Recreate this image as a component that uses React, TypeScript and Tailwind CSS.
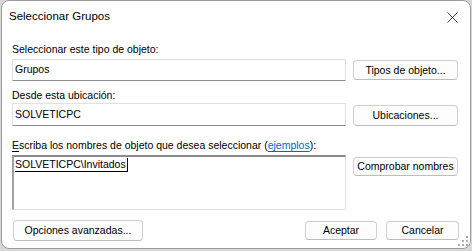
import React from 'react';

function Btn({ label, className }: { label: React.ReactNode; className: string }) {
  return (
    <div
      className={`flex shrink-0 items-center justify-center rounded-[4px] border border-[#d0d0d0] border-b-[#bdbdbd] bg-[#fdfdfd] text-[10.5px] leading-none text-black ${className}`}
    >
      {label}
    </div>
  );
}

export default function App() {
  return (
    <div className="h-[251px] w-[472px] overflow-hidden bg-[#d8d8d8] font-['Liberation_Sans',Arial,sans-serif] text-black">
      <div className="relative ml-px flex h-[249px] w-[470px] flex-col rounded-lg border border-[#9c9c9c] bg-white">
        {/* Title bar */}
        <div className="flex h-[31px] shrink-0 items-center justify-between pl-[7px] pr-[12px]">
          <span className="text-[11.5px] leading-none">Seleccionar Grupos</span>
          <svg width="11" height="11" viewBox="0 0 11 11" className="mt-px">
            <path d="M0.5 0.5 L10.5 10.5 M10.5 0.5 L0.5 10.5" stroke="#2a2a2a" strokeWidth="0.9" fill="none" />
          </svg>
        </div>

        <div className="flex flex-col pl-[10px] text-[10.5px]">
          <div className="mt-[10px] h-[14px] leading-[14px]">Seleccionar este tipo de objeto:</div>
          <div className="mt-[3px] flex gap-[7px]">
            <div className="flex h-[22px] w-[334px] items-center border border-[#e2e2e2] border-b-[#8d8d8d] bg-white pl-[2px]">
              Grupos
            </div>
            <Btn label="Tipos de objeto..." className="mt-px h-[20px] w-[105px]" />
          </div>

          <div className="mt-[7px] h-[14px] leading-[14px]">Desde esta ubicación:</div>
          <div className="mt-px flex gap-[7px]">
            <div className="flex h-[23px] w-[334px] items-center border border-[#e2e2e2] border-b-[#8d8d8d] bg-white pl-[2px]">
              SOLVETICPC
            </div>
            <Btn label="Ubicaciones..." className="mt-[2px] h-[21px] w-[105px]" />
          </div>

          <div className="mt-[12px] h-[14px] leading-[14px]">
            <span className="underline underline-offset-2">E</span>scriba los nombres de objeto que desea seleccionar (
            <span className="text-[#0066cc] underline underline-offset-2">ejemplos</span>):
          </div>
          <div className="mt-[3px] flex gap-[7px]">
            <div className="h-[55px] w-[334px] border-l-2 border-t-2 border-b border-r border-l-[#a0a0a0] border-t-[#8a8a8a] border-b-[#e3e3e3] border-r-[#e3e3e3] bg-white pl-px">
              <span className="inline-block border-b border-r border-black pr-px leading-[13px]">SOLVETICPC\Invitados</span>
            </div>
            <Btn label="Comprobar nombres" className="mt-[2px] h-[19px] w-[105px]" />
          </div>

          <div className="mt-[10px] flex">
            <Btn label="Opciones avanzadas..." className="ml-px h-[21px] w-[130px]" />
            <Btn label="Aceptar" className="ml-[162px] mt-px h-[19px] w-[72px]" />
            <Btn label="Cancelar" className="ml-[9px] mt-px h-[19px] w-[73px]" />
          </div>
        </div>

        {/* resize grip */}
        <svg width="10" height="10" viewBox="0 0 10 10" className="absolute bottom-[2px] right-[2px]">
          <rect x="8" y="0" width="2" height="2" fill="#b0b0b0" />
          <rect x="8" y="4" width="2" height="2" fill="#b0b0b0" />
          <rect x="4" y="4" width="2" height="2" fill="#b0b0b0" />
          <rect x="8" y="8" width="2" height="2" fill="#b0b0b0" />
          <rect x="4" y="8" width="2" height="2" fill="#b0b0b0" />
          <rect x="0" y="8" width="2" height="2" fill="#b0b0b0" />
        </svg>
      </div>
    </div>
  );
}
